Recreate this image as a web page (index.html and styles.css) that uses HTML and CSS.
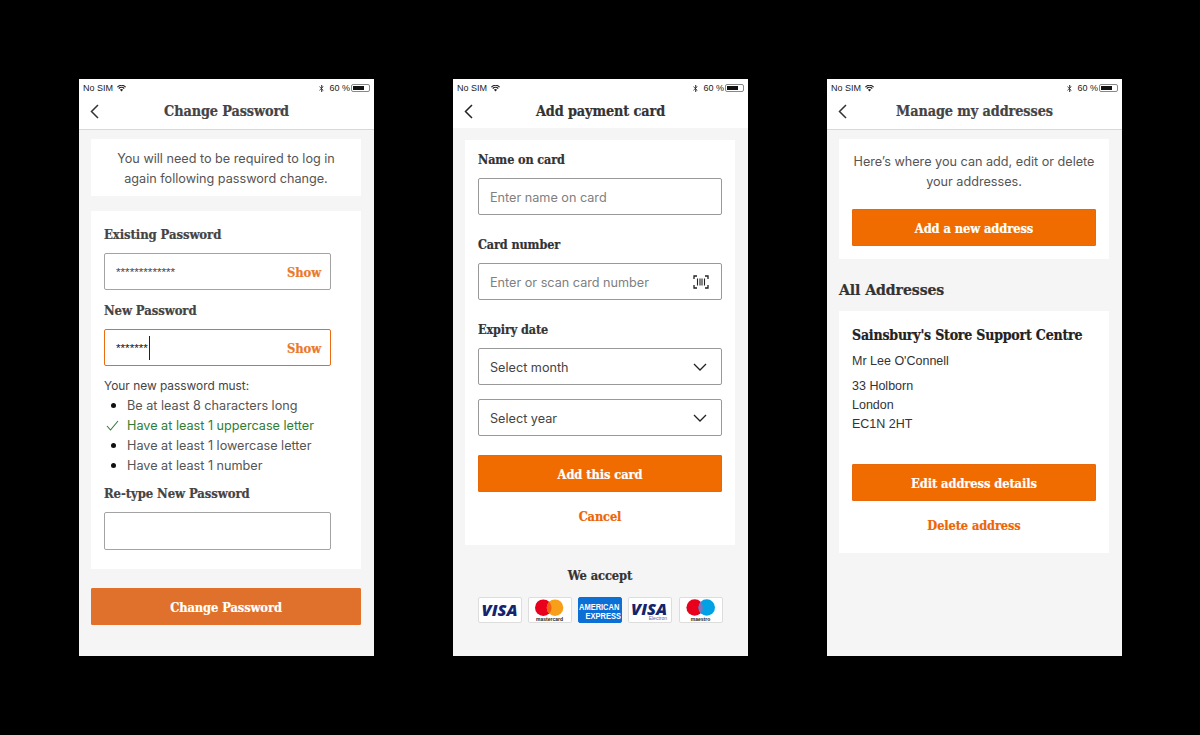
FILE: index.html
```html
<!DOCTYPE html>
<html lang="en">
<head>
<meta charset="utf-8">
<title>Account screens</title>
<link rel="stylesheet" href="styles.css">
</head>
<body>
<main class="stage">

<section class="phone">
  <div class="status">
    <span>No SIM</span>
    <svg class="wifi" viewBox="0 0 12 9"><path d="M6 8.6 3.9 6.2a3 3 0 0 1 4.2 0zM2.9 5.1 1.7 3.9a6 6 0 0 1 8.6 0L9.100 5.100a4.400 4.400 0 0 0-6.200 0zM.9 3 0 2a8.300 8.300 0 0 1 12 0l-.9 1a7 7 0 0 0-10.200 0z"/></svg>
    <span class="status-right">
      <svg class="bt" viewBox="0 0 6 10"><path d="M.5 2.700 5 7 3 9V1l2 2L.5 7.300" fill="none" stroke="#222" stroke-width=".9"/></svg>
      <span>60 %</span>
      <span class="battery"><span class="battery-fill"></span></span>
    </span>
  </div>
  <header class="nav nav-line nav-muted">
    <svg class="back" viewBox="0 0 9 15"><path d="M8 1 1.500 7.500 8 14" fill="none" stroke="#333" stroke-width="1.500"/></svg>
    <h1 class="nav-title">Change Password</h1>
  </header>
  <div class="content">
    <div class="card intro-one">
      <p class="centered">You will need to be required to log in<br>again following password change.</p>
    </div>
    <div class="card form-one">
      <div class="label label-first label-muted">Existing Password</div>
      <div class="field field-short field-tall"><span class="stars">*************</span><span class="show">Show</span></div>
      <div class="label label-second label-muted">New Password</div>
      <div class="field field-short field-active"><span class="stars stars-dark">*******</span><span class="caret"></span><span class="show">Show</span></div>
      <p class="must">Your new password must:</p>
      <ul class="rules">
        <li><span class="mark"><span class="dot"></span></span>Be at least 8 characters long</li>
        <li class="ok"><span class="mark"><svg class="tick" viewBox="0 0 13 11"><path d="M1 6l3.500 4L12 1" fill="none" stroke="#2f7d32" stroke-width="1.100"/></svg></span>Have at least 1 uppercase letter</li>
        <li><span class="mark"><span class="dot"></span></span>Have at least 1 lowercase letter</li>
        <li><span class="mark"><span class="dot"></span></span>Have at least 1 number</li>
      </ul>
      <div class="label label-third label-muted">Re-type New Password</div>
      <div class="field field-short field-retype"></div>
    </div>
    <button class="btn btn-muted btn-gap">Change Password</button>
  </div>
</section>

<section class="phone">
  <div class="status">
    <span>No SIM</span>
    <svg class="wifi" viewBox="0 0 12 9"><path d="M6 8.6 3.9 6.2a3 3 0 0 1 4.2 0zM2.9 5.1 1.7 3.9a6 6 0 0 1 8.6 0L9.100 5.100a4.400 4.400 0 0 0-6.200 0zM.9 3 0 2a8.300 8.300 0 0 1 12 0l-.9 1a7 7 0 0 0-10.200 0z"/></svg>
    <span class="status-right">
      <svg class="bt" viewBox="0 0 6 10"><path d="M.5 2.700 5 7 3 9V1l2 2L.5 7.300" fill="none" stroke="#222" stroke-width=".9"/></svg>
      <span>60 %</span>
      <span class="battery"><span class="battery-fill"></span></span>
    </span>
  </div>
  <header class="nav nav-plain">
    <svg class="back" viewBox="0 0 9 15"><path d="M8 1 1.500 7.500 8 14" fill="none" stroke="#222" stroke-width="1.500"/></svg>
    <h1 class="nav-title">Add payment card</h1>
  </header>
  <div class="content">
    <div class="card form-two">
      <div class="label">Name on card</div>
      <div class="field"><span class="placeholder">Enter name on card</span></div>
      <div class="label label-wide">Card number</div>
      <div class="field"><span class="placeholder">Enter or scan card number</span>
        <svg class="scan" viewBox="0 0 16 14"><path d="M4 1H1v3M12 1h3v3M4 13H1v-3M12 13h3v-3" fill="none" stroke="#222" stroke-width="1.300"/><path d="M4.500 3.500v7M7 3.500v7M9 3.500v7M11.500 3.500v7" fill="none" stroke="#222" stroke-width="1.100"/></svg>
      </div>
      <div class="label label-wide">Expiry date</div>
      <div class="field"><span class="value">Select month</span>
        <svg class="chev" viewBox="0 0 14 8"><path d="M1 1l6 6 6-6" fill="none" stroke="#222" stroke-width="1.300"/></svg>
      </div>
      <div class="field field-next"><span class="value">Select year</span>
        <svg class="chev" viewBox="0 0 14 8"><path d="M1 1l6 6 6-6" fill="none" stroke="#222" stroke-width="1.300"/></svg>
      </div>
      <button class="btn btn-in-form">Add this card</button>
      <a class="link" href="#">Cancel</a>
    </div>
    <div class="accept">We accept</div>
    <div class="logos">
      <div class="logo">
        <svg viewBox="0 0 42 24"><text class="visa" x="20.500" y="17.700" text-anchor="middle">VISA</text></svg>
      </div>
      <div class="logo">
        <svg viewBox="0 0 42 24"><circle cx="14.300" cy="9.700" r="8.300" fill="#e8001c"/><circle cx="26" cy="9.700" r="8.300" fill="#f79e1b"/><path d="M20.150 3.800a8.300 8.300 0 0 1 0 11.800 8.300 8.300 0 0 1 0-11.800z" fill="#f2600f"/><text class="logo-tiny" x="20.500" y="23" text-anchor="middle">mastercard</text></svg>
      </div>
      <div class="logo logo-amex">
        <svg viewBox="0 0 42 24"><text class="amex" x="0" y="10" transform="scale(1 1.200)">AMERICAN</text><text class="amex" x="42" y="17.500" text-anchor="end" transform="scale(1 1.200)">EXPRESS</text></svg>
      </div>
      <div class="logo">
        <svg viewBox="0 0 42 24"><text class="visa" x="20" y="16.700" text-anchor="middle">VISA</text><text class="electron" x="38" y="22" text-anchor="end">Electron</text></svg>
      </div>
      <div class="logo">
        <svg viewBox="0 0 42 24"><circle cx="14.700" cy="9.500" r="8.300" fill="#e8001c"/><circle cx="26.700" cy="9.500" r="8.300" fill="#00a2e5"/><path d="M20.700 3.800a8.300 8.300 0 0 1 0 11.400 8.300 8.300 0 0 1 0-11.400z" fill="#7b74c0"/><text class="logo-tiny" x="20.500" y="23" text-anchor="middle">maestro</text></svg>
      </div>
    </div>
  </div>
</section>

<section class="phone">
  <div class="status">
    <span>No SIM</span>
    <svg class="wifi" viewBox="0 0 12 9"><path d="M6 8.6 3.9 6.2a3 3 0 0 1 4.2 0zM2.9 5.1 1.7 3.9a6 6 0 0 1 8.6 0L9.100 5.100a4.400 4.400 0 0 0-6.200 0zM.9 3 0 2a8.300 8.300 0 0 1 12 0l-.9 1a7 7 0 0 0-10.200 0z"/></svg>
    <span class="status-right">
      <svg class="bt" viewBox="0 0 6 10"><path d="M.5 2.700 5 7 3 9V1l2 2L.5 7.300" fill="none" stroke="#222" stroke-width=".9"/></svg>
      <span>60 %</span>
      <span class="battery"><span class="battery-fill"></span></span>
    </span>
  </div>
  <header class="nav nav-line">
    <svg class="back" viewBox="0 0 9 15"><path d="M8 1 1.500 7.500 8 14" fill="none" stroke="#333" stroke-width="1.500"/></svg>
    <h1 class="nav-title nav-title-grey">Manage my addresses</h1>
  </header>
  <div class="content">
    <div class="card intro-three">
      <p class="centered">Here’s where you can add, edit or delete<br>your addresses.</p>
      <button class="btn btn-top">Add a new address</button>
    </div>
    <h2 class="section-title">All Addresses</h2>
    <div class="card address">
      <h3 class="address-title">Sainsbury's Store Support Centre</h3>
      <p class="person">Mr Lee O'Connell</p>
      <p class="lines">33 Holborn<br>London<br>EC1N 2HT</p>
      <button class="btn btn-edit">Edit address details</button>
      <a class="link" href="#">Delete address</a>
    </div>
  </div>
</section>

</main>
</body>
</html>
```
FILE: styles.css
```css
* { box-sizing: border-box; }
html, body { margin: 0; height: 100%; background: #000; }
body { font-family: Inter, "Liberation Sans", sans-serif; color: #444; overflow: hidden; }
h1, h2, h3, p, ul { margin: 0; padding: 0; }

.stage { display: flex; gap: 79px; padding: 79px 0 0 79px; }
.phone { width: 295px; height: 577px; background: #f5f5f5; display: flex; flex-direction: column; }

.status { height: 18px; background: #fff; display: flex; align-items: center; padding: 0 4px; font: 9px "Liberation Sans", sans-serif; color: #222; }
.wifi { width: 9px; height: 7px; margin-left: 4px; fill: #222; }
.status-right { margin-left: auto; display: flex; align-items: center; }
.bt { width: 5px; height: 9px; margin-right: 5px; }
.battery { width: 19px; height: 8px; margin-left: 1px; border: 1px solid #888; border-radius: 2px; padding: 1px; }
.battery-fill { display: block; width: 11px; height: 100%; background: #111; }

.nav { background: #fff; display: flex; align-items: center; justify-content: center; position: relative; padding-bottom: 4px; }
.nav-plain { height: 31px; }
.nav-line { height: 33px; border-bottom: 1px solid #d9d9d9; padding-bottom: 5px; }
.back { position: absolute; left: 11px; top: 7px; width: 9px; height: 15px; }
.nav-title { font: 700 14.300px "DejaVu Serif Condensed", "DejaVu Serif", serif; color: #333; letter-spacing: -.1px; -webkit-text-stroke: .2px currentColor; }
.nav-muted .nav-title, .nav-title-grey { color: #444; }

.content { padding: 0 13px 0 12px; display: flex; flex-direction: column; }
.card { background: #fff; padding-left: 13px; padding-right: 13px; }
.centered { text-align: center; font-size: 12.650px; line-height: 19.500px; color: #555; }

.intro-one { margin-top: 9px; height: 57px; padding-top: 10px; padding-left: 0; padding-right: 0; }
.form-one { margin-top: 15px; padding-top: 13px; padding-bottom: 19px; }
.form-two { margin-top: 12px; padding-top: 9px; padding-bottom: 17px; }
.intro-three { margin-top: 9px; padding-top: 13px; padding-bottom: 13px; padding-left: 13px; }

.label { font: 700 13px/22px "DejaVu Serif Condensed", "DejaVu Serif", serif; color: #333; margin-bottom: 6px; letter-spacing: -.1px; -webkit-text-stroke: .2px currentColor; }
.form-two .label { font-size: 12.500px; margin-bottom: 7px; }
.label-muted { color: #444; }
.label-second { margin-top: 11px; }
.label-third { margin-top: 9px; }
.label-wide { margin-top: 19px; }
.form-one .label { margin-bottom: 7px; }
.form-one .label-second { margin-top: 10px; }
.form-one .label-third { margin-top: 8px; }

.field { height: 37px; width: 244px; background: #fff; border: 1px solid #999; border-radius: 2px; display: flex; align-items: center; padding: 0 12px 0 11px; font-size: 12.650px; }
.field-short { width: 227px; border-color: #a3a3a3; }
.field-retype { height: 38px; }
.field-active { border: 1.500px solid #ec6c14; }
.field-next { margin-top: 14px; }

.stars { font: 11.700px "Liberation Sans", sans-serif; color: #444; }
.stars-dark { color: #111; }
.caret { width: 1px; height: 24px; background: #222; margin-left: 1px; }
.show { margin: 2px -3px 0 auto; font: 700 12.800px "DejaVu Serif Condensed", "DejaVu Serif", serif; color: #ea7a2a; letter-spacing: -.1px; -webkit-text-stroke: .2px currentColor; }

.placeholder { color: #808080; margin-top: 2px; }
.value { color: #444; margin-top: 2px; }
.scan { margin-left: auto; width: 16px; height: 14px; }
.chev { margin-left: auto; width: 14px; height: 8px; margin-right: 2px; }

.must { margin-top: 10px; font-size: 11.900px; line-height: 19px; color: #444; }
.rules { list-style: none; }
.rules li { display: flex; align-items: center; height: 20px; font-size: 12.650px; color: #555; }
.rules li.ok { color: #2f7d32; }
.mark { width: 23px; display: flex; justify-content: flex-start; align-items: center; }
.dot { width: 5px; height: 5px; background: #111; border-radius: 50%; margin-left: 6.500px; }
.tick { width: 13px; height: 11px; margin-left: 2px; }

.btn { display: block; width: 100%; height: 37px; background: #f06c00; border: 1px solid #e8690a; border-radius: 1px; color: #fff; font: 700 12.800px "DejaVu Serif Condensed", "DejaVu Serif", serif; letter-spacing: -.1px; padding: 2px 0 0; -webkit-text-stroke: .2px currentColor; }
.btn-muted { background: #e0712c; border-color: #e4702a; }
.btn-gap { margin-top: 19px; }
.btn-in-form { margin-top: 19px; }
.btn-top { margin-top: 18px; }
.btn-edit { margin-top: 30px; }

.link { display: block; margin-top: 14px; text-align: center; font: 700 12.700px/22px "DejaVu Serif Condensed", "DejaVu Serif", serif; color: #ec6608; text-decoration: none; letter-spacing: -.1px; -webkit-text-stroke: .2px currentColor; }

.accept { margin-top: 20px; text-align: center; font: 700 12.800px/22px "DejaVu Serif Condensed", "DejaVu Serif", serif; color: #333; letter-spacing: -.1px; -webkit-text-stroke: .2px currentColor; }
.logos { margin-top: 10px; display: flex; justify-content: center; gap: 6.250px; }
.logo { width: 44px; height: 26px; background: #fff; border: 1px solid #ddd; border-radius: 2px; overflow: hidden; }
.logo svg { display: block; width: 42px; height: 24px; }
.logo-amex { background: #0b6fd6; border-color: #0b6fd6; }
.visa { font: italic 800 16.400px "Open Sans", sans-serif; fill: #14246e; }
.amex { font: 700 7.500px "Liberation Sans", sans-serif; fill: #fff; }
.logo-tiny { font: 700 5px "Liberation Sans", sans-serif; fill: #222; }
.electron { font: 5px "Liberation Sans", sans-serif; fill: #5e66a8; }

.section-title { margin-top: 20px; font: 700 15.700px/22px "DejaVu Serif Condensed", "DejaVu Serif", serif; color: #333; letter-spacing: -.1px; -webkit-text-stroke: .2px currentColor; }
.address { margin-top: 10px; padding-top: 13px; padding-bottom: 16px; }
.address-title { font: 700 14px/22px "DejaVu Serif Condensed", "DejaVu Serif", serif; color: #222; letter-spacing: -.2px; -webkit-text-stroke: .2px currentColor; }
.person { margin-top: 5px; font: 12.500px/20px "Liberation Sans", sans-serif; color: #333; }
.lines { margin-top: 6px; font: 12.500px/19px "Liberation Sans", sans-serif; color: #333; }
```
